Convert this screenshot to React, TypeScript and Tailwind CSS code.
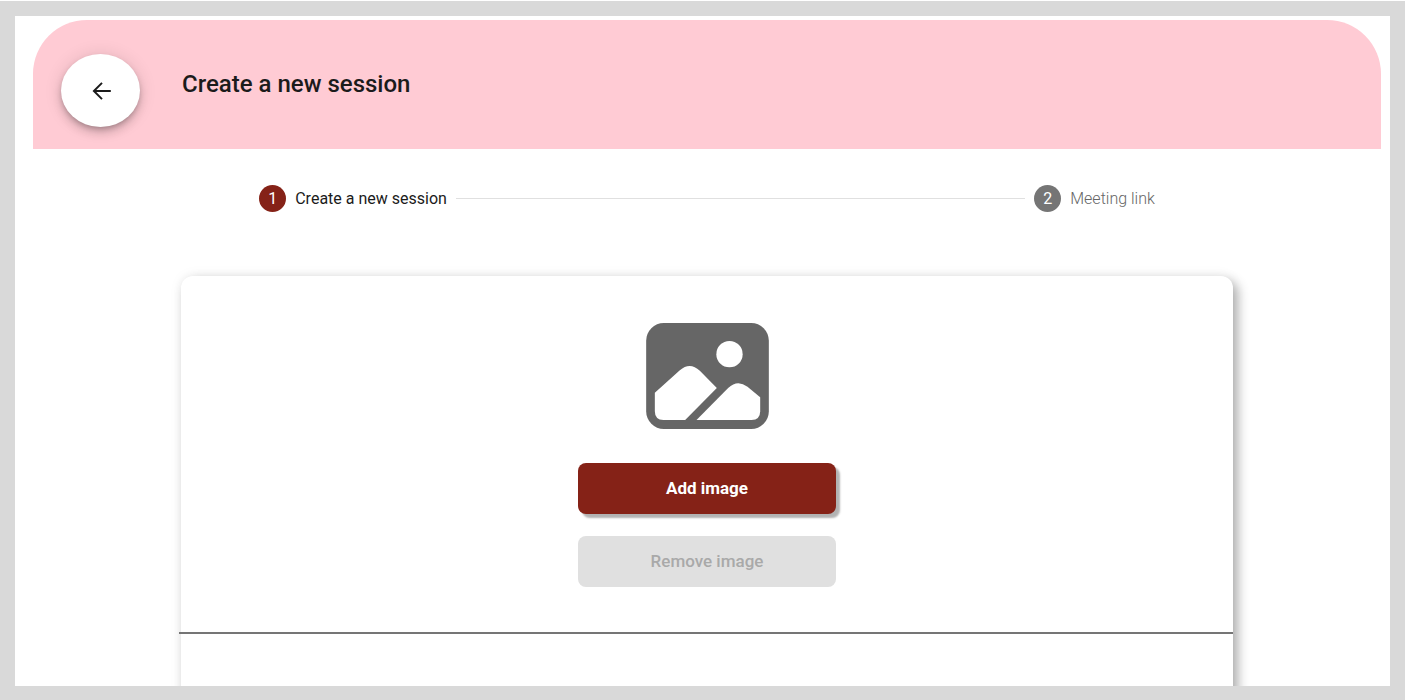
import React from "react";

function BackArrow() {
  return (
    <svg viewBox="0 0 24 24" className="ml-0.5 size-6" fill="currentColor" aria-hidden="true">
      <path d="M20.800 11H6.300L12.700 4.500 11.300 3.200 2.500 12 11.300 20.800 12.700 19.500 6.300 13H20.800Z" />
    </svg>
  );
}

function Picture() {
  return (
    <svg viewBox="47 37 368 318" className="h-[106px] w-[123px]" aria-hidden="true">
      <rect x="47" y="37" width="368" height="318" rx="53" fill="#666666" />
      <g fill="#ffffff">
        <circle cx="297" cy="130.500" r="39.500" />
        <path d="M73 246 L148 179 Q178 152 208 180 L259 232 L164 328 H99 Q73 328 73 302 Z" />
        <path d="M198 328 L293 232 Q321 205 351 228 L389 260 V302 Q389 328 363 328 Z" />
      </g>
    </svg>
  );
}

export default function App() {
  return (
    <div className="h-screen bg-white pt-px pr-px font-['Roboto',sans-serif] text-[#1b1b1b]">
      <div className="h-full overflow-hidden border-[15px] border-b-[14px] border-[#d9d9d9] bg-white pt-1 pr-[9px] pl-[18px]">
        <header className="flex h-[129px] items-center gap-[42px] rounded-t-[54px] bg-[#ffcbd4] pl-7">
          <button
            type="button"
            aria-label="Back"
            className="mt-3 flex h-[73px] w-[79px] items-center justify-center rounded-[50%] bg-white shadow-[0_3px_5px_-1px_rgba(0,0,0,0.2),0_6px_10px_rgba(0,0,0,0.14),0_1px_18px_rgba(0,0,0,0.12)]"
          >
            <BackArrow />
          </button>
          <h1 className="pb-0.5 text-2xl font-medium">Create a new session</h1>
        </header>

        <main className="flex flex-col items-center">
          <ol className="flex w-[70%] items-center gap-[9px] px-6 pt-9 text-base">
            <li className="flex items-center gap-[9px]" aria-current="step">
              <span className="flex size-[27px] items-center justify-center rounded-full bg-[#852217] text-white">
                1
              </span>
              <span>Create a new session</span>
            </li>
            <li role="presentation" className="h-px flex-1 bg-[#e0e0e0]" />
            <li className="flex items-center gap-[9px]">
              <span className="flex size-[27px] items-center justify-center rounded-full bg-[#757575] text-white">
                2
              </span>
              <span className="font-light text-[#666666]">Meeting link</span>
            </li>
          </ol>

          <section className="mt-16 h-[600px] w-[78%] rounded-xl bg-white shadow-[5px_5px_12px_rgba(0,0,0,0.3),0_0_14px_rgba(0,0,0,0.06)]">
            <div className="-ml-0.5 flex flex-col items-center border-b-2 border-[#757575] pt-[47px] pb-[45px] pl-0.5">
              <Picture />
              <button
                type="button"
                className="mt-[34px] h-[51px] w-[258px] rounded-lg bg-[#852217] text-[17px] font-bold text-white shadow-[4px_4px_2px_rgba(0,0,0,0.3)]"
              >
                Add image
              </button>
              <button
                type="button"
                disabled
                className="mt-[22px] h-[51px] w-[258px] rounded-lg bg-[#e0e0e0] text-[17px] font-medium text-[#a9a9a9]"
              >
                Remove image
              </button>
            </div>
          </section>
        </main>
      </div>
    </div>
  );
}
